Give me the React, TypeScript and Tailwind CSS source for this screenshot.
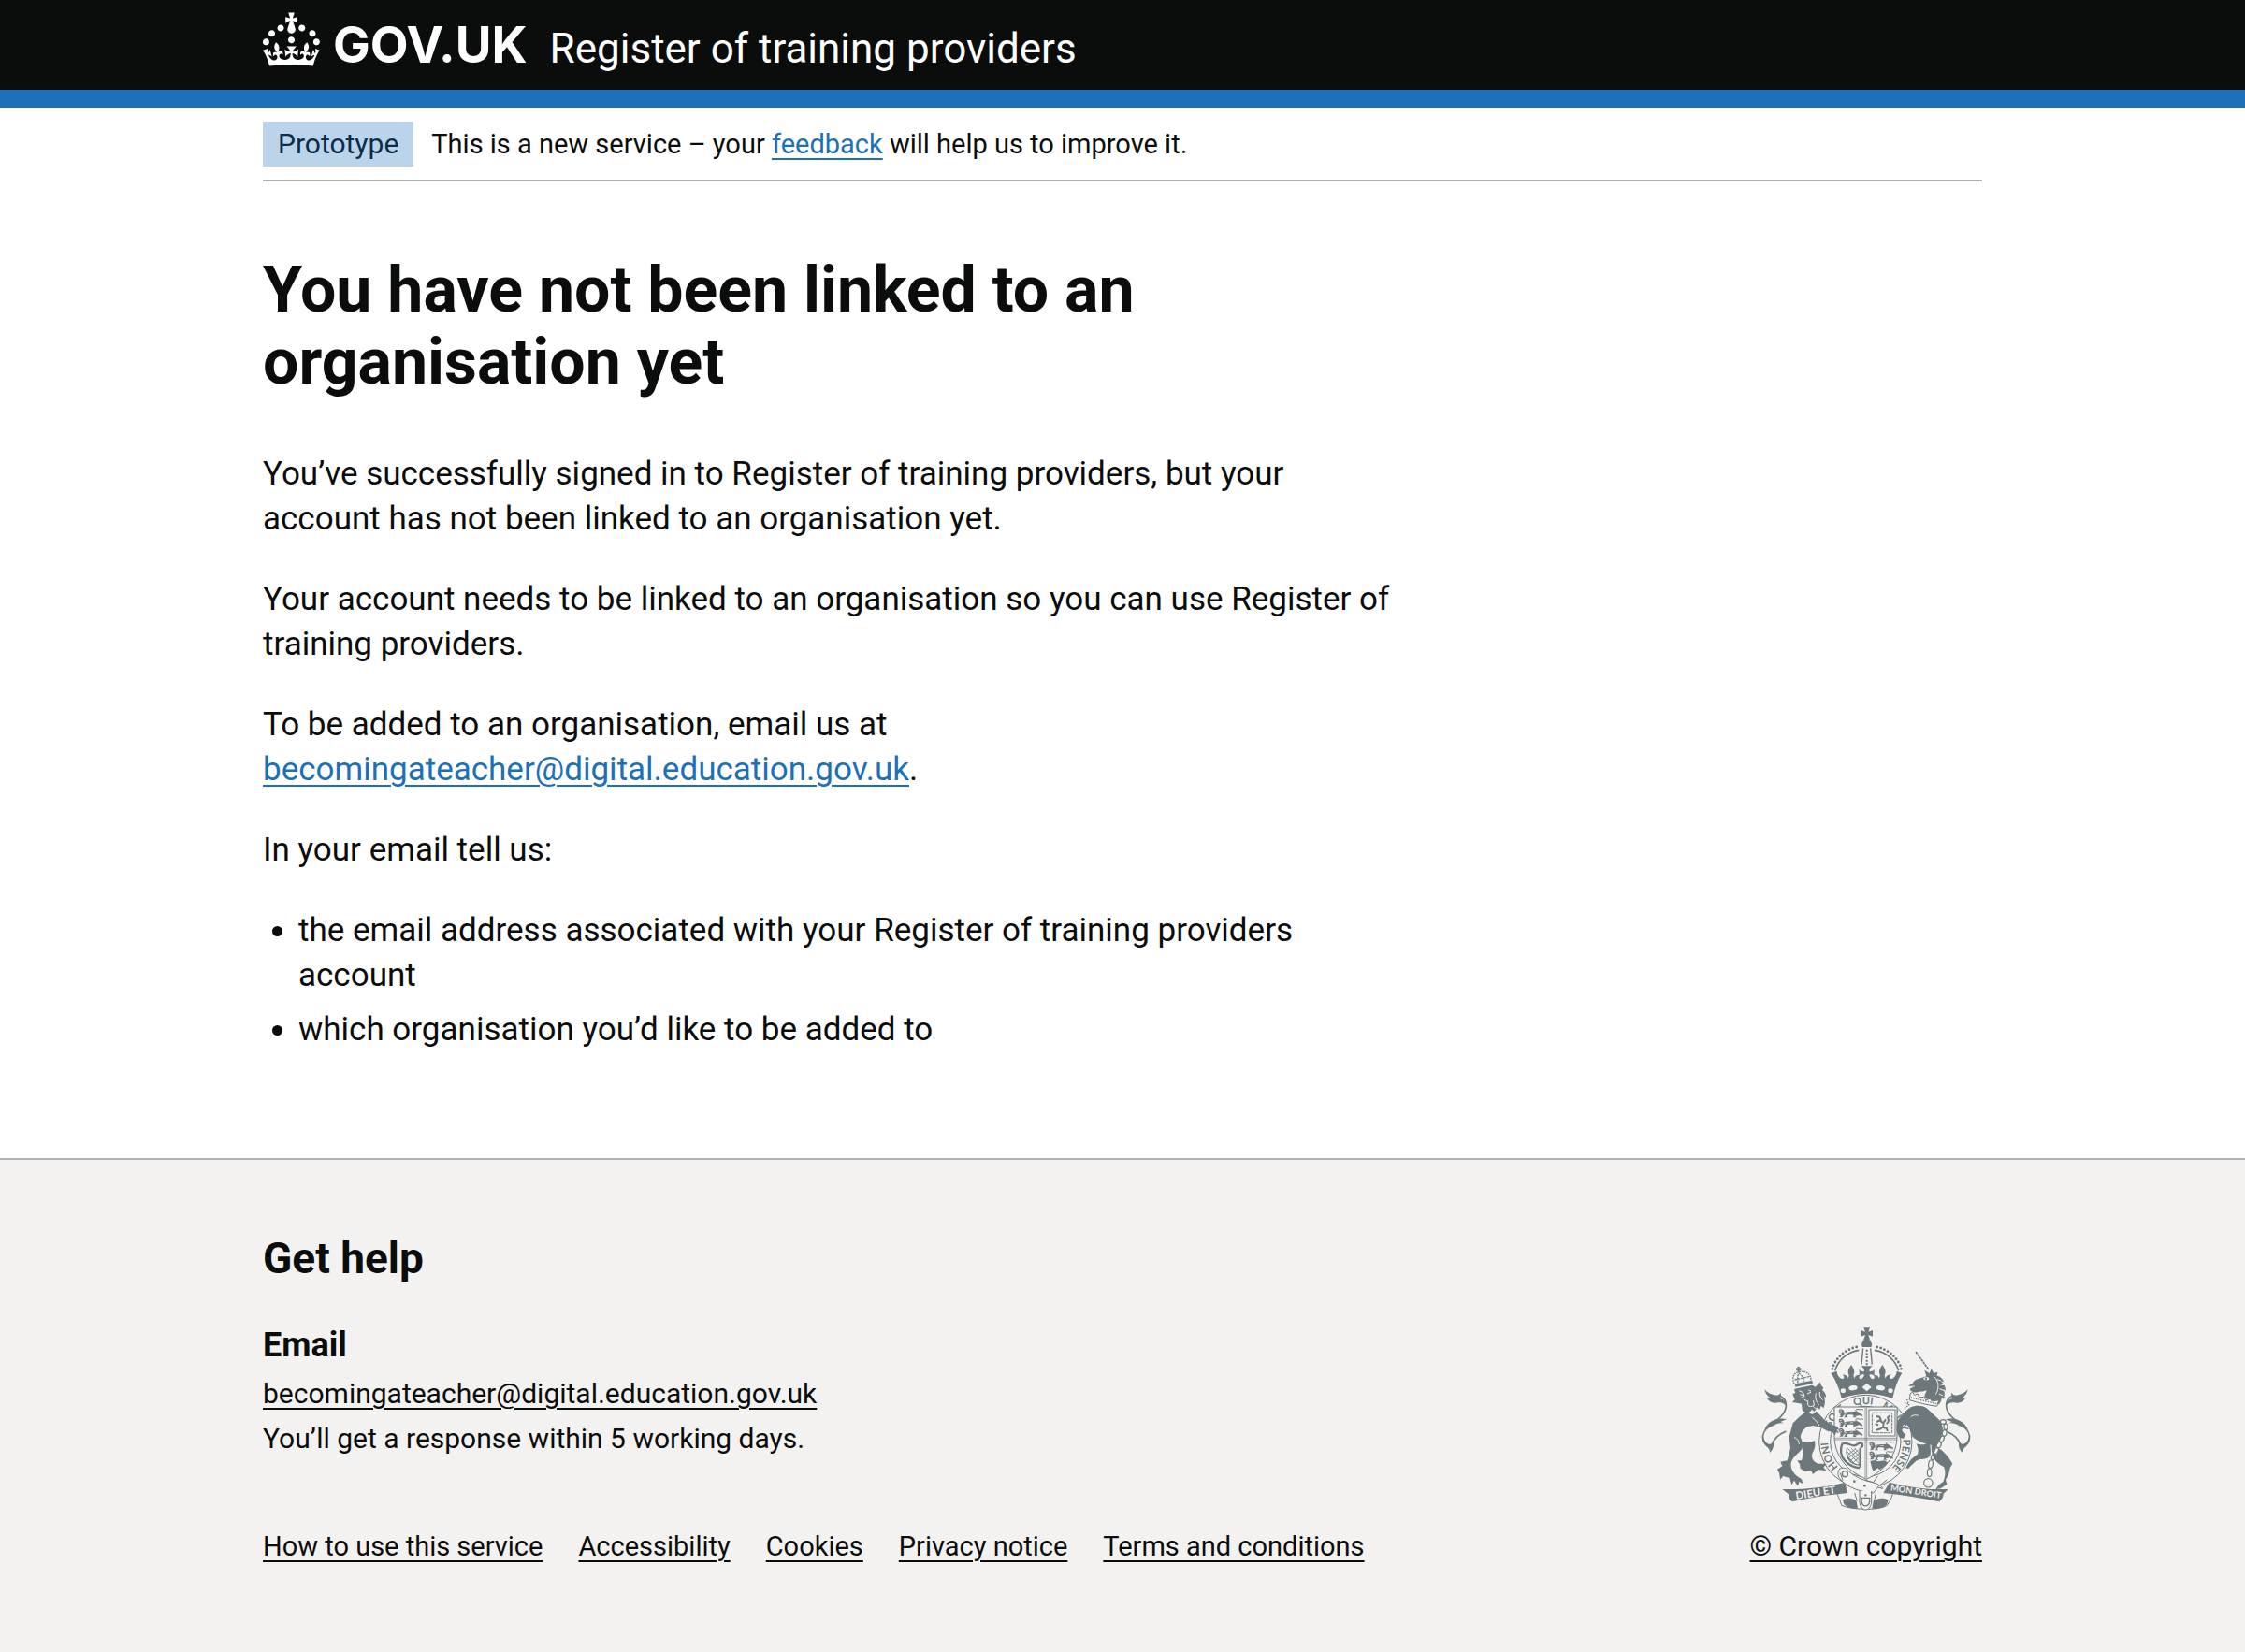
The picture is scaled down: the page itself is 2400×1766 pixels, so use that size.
import React from "react";

const EMAIL = "becomingateacher@digital.education.gov.uk";

const footerLinks = [
  "How to use this service",
  "Accessibility",
  "Cookies",
  "Privacy notice",
  "Terms and conditions",
];

const GREY = "#6c787b";
const PAPER = "#f3f2f1";

function Crown() {
  return (
    <svg viewBox="0 0 32 30" className="h-[58px] w-[61px] shrink-0" fill="currentColor" aria-hidden="true">
      <path d="M22.6 10.4c-1 .4-2-.1-2.4-1-.4-.9.1-2 1-2.4.9-.4 2 .1 2.4 1s-.1 2-1 2.4m5.9 3c-1 .4-2-.1-2.4-1-.4-.9.1-2 1-2.4.9-.4 2 .1 2.4 1s0 2-1 2.4m-11.8 3.7c-.9.4-2-.1-2.4-1-.4-.9.1-2 1-2.4.9-.4 2 .1 2.4 1s-.1 2-1 2.4m14.1 1.1c-1 .4-2-.1-2.4-1-.4-.9.1-2 1-2.4.9-.4 2 .1 2.4 1s-.1 2-1 2.4M17 4.7l2.3 1.2V2.5l-2.3.7-.2-.2.9-3h-3.4l.9 3-.2.2-2.3-.7v3.4L15 4.7c.1.1.1.2.2.2l-1.3 4c-.1.2-.1.4-.1.6 0 1.1.8 2 1.9 2.2h.7c1-.2 1.9-1.1 1.9-2.1 0-.2 0-.4-.1-.6l-1.3-4c-.1-.2 0-.2 0-.3m-7.6 5.7c.9.4 2-.1 2.4-1 .4-.9-.1-2-1-2.4-.9-.4-2 .1-2.4 1s0 2 1 2.4m-5 3c.9.4 2-.1 2.4-1 .4-.9-.1-2-1-2.4-.9-.4-2 .1-2.4 1s.1 2 1 2.4m-3.2 4.8c.9.4 2-.1 2.4-1 .4-.9-.1-2-1-2.4-.9-.4-2 .1-2.4 1s0 2 1 2.4m14.8 11c4.4 0 8.6.3 12.3.8 1.1-4.5 2.4-7 3.7-8.8l-2.5-.9c.2 1.3.3 1.9 0 2.7-.4-.4-.8-1.1-1.1-2.3l-1.2 4c.7-.5 1.3-.8 2-.9-1.1 2.5-2.6 3.1-3.5 3-1.1-.2-1.7-1.2-1.5-2.1.3-1.2 1.5-1.5 2.1-.1 1.1-2.3-.8-3-2-2.3 1.9-1.9 2.1-3.5.6-5.6-2.1 1.6-2.1 3.2-1.2 5.5-1.2-1.4-3.2-.6-2.5 1.6.9-1.4 2.1-.5 1.9.8-.2 1.1-1.7 2.1-3.5 1.9-2.7-.2-2.9-2.1-2.9-3.6.7-.1 1.9.5 2.9 1.9l.4-4.3c-1.1 1.1-2.1 1.4-3.2 1.4.4-1.2 2.1-3 2.1-3h-5.4s1.7 1.9 2.1 3c-1.1 0-2.1-.2-3.2-1.4l.4 4.3c1-1.4 2.2-2 2.9-1.9-.1 1.5-.2 3.4-2.9 3.6-1.9.2-3.4-.8-3.5-1.9-.2-1.3 1-2.2 1.9-.8.7-2.3-1.2-3-2.5-1.6.9-2.2.9-3.9-1.2-5.5-1.5 2-1.3 3.7.6 5.6-1.2-.7-3.1 0-2 2.3.6-1.4 1.8-1.1 2.1.1.2.9-.3 1.9-1.5 2.1-.9.2-2.4-.5-3.5-3 .6 0 1.2.3 2 .9l-1.2-4c-.3 1.1-.7 1.9-1.1 2.3-.3-.8-.2-1.4 0-2.7l-2.9.9C1.3 23 2.6 25.5 3.7 30c3.7-.5 7.9-.8 12.3-.8" />
    </svg>
  );
}

/* One walking lion of the English quarters. */
function Passant({ x, y }: { x: number; y: number }) {
  return (
    <g transform={`translate(${x} ${y})`}>
      <path
        fill={GREY}
        d="M3 3c5-4 10-3 13 1 4 3 4 6 3 9 10-5 20-3 30-4 8-1 14-1 18 3l12 8-2 5-11-5c-2 3-8 4-12 3l5 5H48l2-8c-6-1-12-1-18-1l-5 5 5 4H19l5-9-6 1-4 7H4l5-6-4-3 4-3c-6 0-8-7-6-12z"
      />
      <path fill="none" stroke={GREY} strokeWidth="3" d="M64 12c-14-6-6-13 2-10 6 2 10-2 15 1" />
      <path fill="none" stroke={PAPER} strokeWidth="2" d="M5 7l7-1M20 16l8-2M38 14l10-1M7 12l6 1" />
    </g>
  );
}

/* Flame-tipped tail on the lion's side; mirrored for the unicorn. */
function Tail() {
  return (
    <g>
      <path fill="none" stroke={GREY} strokeWidth="5" d="M148 384C122 396 112 406 104 424c-4 14-16 10-22 0-14-20-8-40 10-54 28-22 54-40 56-66 1-18-6-28-22-34" />
      <path fill={GREY} d="M79 250c10 12 22 16 32 18 8 2 16 0 20-8 2 8 0 14-4 18 14 2 22 14 22 24-8-8-16-12-26-10-14 4-32-2-36-16 4 3 8 4 12 3-12-8-18-18-20-29z" />
      <path fill={GREY} d="M79 378c8-18 22-30 44-34 10-1 18-1 27 3-8 0-12 4-20 7 4 1 6 2 10 5-12-3-22 1-32 7-10 5-20 8-29 12zM72 395c2 14 8 24 20 30 10 2 14-4 14-12 5 14 2 28-9 40-1-8-4-14-12-20-12-10-16-24-13-38z" />
    </g>
  );
}

const garterWords: [string, string][] = [
  ["HONI", "13%"],
  ["SOIT", "31%"],
  ["QUI", "45%"],
  ["MAL", "57%"],
  ["Y", "68%"],
  ["PENSE", "74%"],
];

const pearls = [
  [297, 184], [300, 173], [306, 162], [313, 152], [321, 143],
  [330, 135], [340, 128], [351, 122], [362, 117], [374, 114],
];

function CoatOfArms() {
  return (
    <svg viewBox="60 45 690 600" className="h-[200px] w-[230px]" role="img" aria-label="Royal coat of arms">
      {/* Orb and cross */}
      <g fill={GREY}>
        <path d="M397 52h20l-5 13 14-5v20l-14-5 5 15h-20l5-15-14 5V60l14 5z" />
        <path d="M400 88h14l2 6c8 4 9 14 5 20h-28c-4-6-3-16 5-20z" />
      </g>
      {/* Arches */}
      <g fill="none" stroke={GREY}>
        <path strokeWidth="5" d="M305 190c10-34 38-60 77-66M509 190c-10-34-38-60-77-66" />
        <path strokeWidth="4" d="M395 118l-5 52M419 118l5 52" />
        <path strokeWidth="6" strokeDasharray="6 5" d="M407 122v50" />
      </g>
      {pearls.map(([x, y]) => (
        <g key={x} fill={GREY}>
          <circle cx={x} cy={y} r="4.2" />
          <circle cx={814 - x} cy={y} r="4.2" />
        </g>
      ))}
      {/* Crown circlet with crosses and fleurs-de-lis */}
      <path
        fill={GREY}
        d="M294 197l17-6c0 10 6 20 14 24 10 4 12-8 4-12 12-2 18 6 18 12l3-10c-6-12-2-22 7-34 9 12 13 22 7 34l4 10c0-8 8-14 17-10-5 6-2 12 4 12 4-2 8-6 10-14-8-3-12 0-16 5v-22c6 6 12 8 16 6 0-8-4-12-10-17h36c-6 5-10 9-10 17 4 2 10 0 16-6v22c-4-5-8-8-16-5 2 8 6 12 10 14 6 0 9-6 4-12 9-4 17 2 17 10l4-10c-6-12-2-22 7-34 9 12 13 22 7 34l3 10c0-6 6-14 18-12-8 4-6 16 4 12 8-4 14-14 14-24l17 6c-14 22-24 50-30 82-54-20-110-20-164 0-6-32-20-60-34-82z"
      />
      <g fill={PAPER}>
        <path d="M392 243l15-13 15 13-15 13z" />
        <ellipse cx="363" cy="245" rx="14" ry="8" transform="rotate(-8 363 245)" />
        <ellipse cx="451" cy="245" rx="14" ry="8" transform="rotate(8 451 245)" />
        <ellipse cx="331" cy="254" rx="8" ry="7" />
        <ellipse cx="483" cy="254" rx="8" ry="7" />
      </g>

      {/* Garter */}
      <circle cx="403" cy="417" r="149" fill={PAPER} stroke={GREY} strokeWidth="3" />
      <circle cx="403" cy="417" r="113" fill="none" stroke={GREY} strokeWidth="3" />
      <path id="garter-text" fill="none" d="M403 537A120 120 0 0 1 403 297A120 120 0 0 1 403 537" />
      <text fill={GREY} fontFamily="Lato" fontSize="33" fontWeight="700">
        {garterWords.map(([word, start]) => (
          <textPath key={word} href="#garter-text" startOffset={start}>{word}</textPath>
        ))}
      </text>

      {/* Shield */}
      <path fill={PAPER} stroke={GREY} strokeWidth="3" d="M303 306h201v92c0 62-36 110-98 140-66-28-103-78-103-140z" />
      <path fill="none" stroke={GREY} strokeWidth="2" d="M402 308v228M407 308v228M304 406h200M304 411h200" />
      <Passant x={315} y={312} />
      <Passant x={315} y={343} />
      <Passant x={315} y={374} />
      <g fill="none" stroke={GREY}>
        <rect x="414" y="315" width="84" height="84" strokeWidth="3" />
        <rect x="424" y="325" width="64" height="64" strokeWidth="3" strokeDasharray="10 2" />
      </g>
      <path
        fill="none"
        stroke={GREY}
        strokeWidth="6"
        d="M436 336l12 2 4 10-14 6M450 350l10 8 8-12M460 356c2 12 0 16-8 20l-14 4M458 372l12 2 4 10M434 360l10 4M470 360c8-4 8-14 4-20l6-6"
      />
      {/* Harp */}
      <path fill="none" stroke={GREY} strokeWidth="7" d="M328 424c-8 22-2 42 8 54 12 14 28 22 48 24" />
      <path fill="none" stroke={GREY} strokeWidth="7" d="M328 424c16-6 24 6 38 6 12 0 14-12 24-8 6 4 4 14-4 14M386 438v62" />
      <path fill="none" stroke={GREY} strokeWidth="4" d="M344 436c-4 18 2 36 12 46 8 6 16 10 28 10" />
      <path
        fill="none"
        stroke={GREY}
        strokeWidth="2.5"
        d="M347 440l36 38M344 450l40 38M346 466l24 24M356 438l28 28M367 438l17 17M380 444l-34 28M384 454l-34 28M384 466l-26 24M372 440l-28 22"
      />
      <Passant x={413} y={417} />
      <Passant x={413} y={448} />
      <path fill={GREY} d="M418 480l14-3 12 4 20-3 10 6-8 12-18 12-6-6-14 10-4-8z" />

      {/* Lion */}
      <g fill={GREY}>
        <path d="M184 177h8l-1 5 5-1v8l-5-1 1 6h-8l1-6-5 1v-8l5 1z" />
        <path fill="none" stroke={GREY} strokeWidth="4" strokeDasharray="5 3" d="M174 232c-8-22-2-34 14-38 24-6 40 6 40 28" />
        <path fill="none" stroke={GREY} strokeWidth="4" strokeDasharray="7 3" d="M186 228c-2-14-1-22 3-30 10 6 15 14 17 26M176 219l50-11" />
        <path d="M176 232l56-11 2 10-56 11z" />
        <path d="M182 247l50-11 10 6 16-16c0 8 4 14 10 18l-4 8c8 6 13 14 12 23l-6-1c4 12 4 24-2 36l-8-8-4 12-8-6-10 14-6-8-16 16-16-14-2-20-10-2-20-3 8-8-7-18 9-4-4-12z" />
        <path d="M206 318l26 12 14-10 18 20c12 14 26 22 50 30l4 10-8-2 8 12-10-2-2 10-10-12-14-2-22-12-24-6-22 4c-10 10-18 18-20 32 6 12 8 26 4 40-10 14-30 26-34 44-2 16 4 26 16 40l18 12 4 14-12-6-4 14-12-18-8 14-6-22-22-6-8 12-4-22-6-12 16-10-6-14 22-4 4-16 6-24-4-36 12-44c16-16 34-34 56-44z" />
        <path d="M190 412c16 10 34 10 50 2 4 20-2 30-8 42-4 14 4 26 18 32l28 0-10 12 10 10-26-2-18 14-6-12-16 4-18-10-2-14-8-12 14 0c8-22 4-36-8-66z" />
      </g>
      <g fill="none" stroke={PAPER} strokeWidth="3">
        <path d="M189 254l14 6 4 12-10 4M220 252l8 4M193 266l10 3M216 264l12-5M218 286v14c4 6 12 6 20 1l-2-16M206 282l10 6M244 262c-4 16 2 30 10 38M256 258c-2 12 4 20 10 26M236 304c4 8 8 8 14 4" />
        <path d="M174 404c8 2 14 8 16 22M232 340c12 8 20 20 22 26" />
      </g>
      <Tail />

      {/* Unicorn */}
      <g transform="translate(810 0) scale(-1 1)">
        <Tail />
      </g>
      <path fill="none" stroke={GREY} strokeWidth="5" strokeDasharray="8 2" d="M564 129l42 58" />
      <g fill={GREY}>
        <path d="M540 238l14-6c2-8 8-14 18-16l26-8-6-20 16 10 6-14 8 14 12-4-2 12c12 2 18 10 22 20l-8-2c10 10 14 18 14 30l-7-5c5 12 4 22 1 32l-7-6c0 12-4 16-9 24l-5-10-11 2c-10-6-18-6-28-14-6-8 4-14 4-24-8 4-14 4-22 4-8 2-12 4-18 2l-10-4-2-8 10-4z" />
        <path d="M506 350c14-18 26-34 44-44 24-8 44-2 54 8l32 30c14 14 18 34 12 52-8 16-12 26-10 42 12 8 30 26 44 50l-8 14c-2 16-6 24-14 38l4 14-20 14-16 2 10-14 14-10c8-20 8-34 2-48-20-10-34-22-38-44-2-10-2-18-2-26-20-2-44-12-60-26-6-16-8-28-18-38-6-4-12-2-14 4-4 12-2 18 10 28l-8 12-12-4c-12-18-12-36-6-54z" />
        <path d="M566 424c14 6 30 2 44-4 0 18 4 30 0 42-6 10-18 12-32 12-12 2-22 14-38 30l-8-2c8-18 18-32 38-44 4-12 2-22-4-34z" />
      </g>
      <ellipse cx="598" cy="215" rx="9" ry="5" fill={PAPER} />
      <circle cx="597" cy="215" r="3.5" fill={GREY} />
      <g fill="none" stroke={PAPER} strokeWidth="3">
        <path d="M544 241l16-1M624 210c14 14 16 36 4 56M632 218l14 4M638 232l16 4M640 248l16 6M638 264l14 6" />
        <path d="M548 338c10-8 18-6 26-4" />
      </g>
      <path fill={PAPER} stroke={GREY} strokeWidth="3" d="M546 264l8-6 6 10 10-4 6 12 14-2 6 10 14-4 6 8 22-4-6 20c-32-4-60-12-88-20z" />
      <path fill="none" stroke={GREY} strokeWidth="4" strokeDasharray="4 4" d="M548 276l84 20M536 282l6 18-16 12M528 292l14 6" />

      {/* Chain */}
      <path fill="none" stroke={PAPER} strokeWidth="12" d="M652 354c10 10 8 28 2 42l-28 60" />
      <g fill="none" stroke={GREY} strokeWidth="3.5">
        <ellipse cx="652" cy="354" rx="9" ry="7" />
        <ellipse cx="660" cy="370" rx="6" ry="10" />
        <ellipse cx="656" cy="390" rx="7" ry="10" transform="rotate(15 656 390)" />
        <ellipse cx="648" cy="409" rx="6" ry="11" transform="rotate(25 648 409)" />
        <ellipse cx="638" cy="428" rx="7" ry="10" transform="rotate(25 638 428)" />
        <ellipse cx="630" cy="447" rx="6" ry="11" transform="rotate(25 630 447)" />
        <ellipse cx="620" cy="466" rx="6" ry="10" transform="rotate(25 620 466)" />
        <ellipse cx="612" cy="490" rx="7" ry="13" transform="rotate(8 612 490)" />
        <ellipse cx="608" cy="517" rx="7" ry="13" />
        <circle cx="604" cy="550" r="14" />
      </g>

      {/* Ribbon with the motto */}
      <g fill={GREY}>
        <path d="M136 570c68 2 136-6 202-22l6 34-28 4c-48 4-100 14-148 24-10-10-14-16-12-24z" />
        <path d="M668 570c-68 2-122-6-188-22l-20 34 32 4c48 4 100 14 148 24 10-10 14-16 12-24z" />
        <path d="M330 604c14-8 36-6 44 4l4 24c-16 2-32-2-44-14zM476 604c-14-8-36-6-48 4l-4 24c20 2 38-2 48-14z" />
      </g>
      <path fill="none" stroke={GREY} strokeWidth="3" d="M312 586c6 12 10 22 14 36 30 14 120 18 146 0 8-12 14-22 18-36M368 582l8 26M436 584l-6 26" />
      <g fill={PAPER} fontFamily="Lato" fontWeight="700">
        <text transform="translate(181 603) rotate(-9)" fontSize="34">DIEU ET</text>
        <text transform="translate(482 574) rotate(9)" fontSize="28">MON DROIT</text>
      </g>

      {/* Garter strap and buckle */}
      <path
        fill={PAPER}
        stroke={GREY}
        strokeWidth="3"
        d="M316 512c2-14 26-14 34 0 26 26 54 30 82 38 12 4 24 10 26 18l-16-4-14 18c-36-2-84-16-108-46-6-8-6-16-4-24z"
      />
      <circle cx="337" cy="521" r="9" fill="none" stroke={GREY} strokeWidth="4" />
      <path fill="none" stroke={GREY} strokeWidth="3" d="M322 518l8 24M400 540l28 8 14-20M442 562l30-22" />
      <circle cx="367" cy="545" r="4" fill={GREY} />
      <circle cx="400" cy="559" r="4" fill={GREY} />
      <path fill={PAPER} stroke={GREY} strokeWidth="3" d="M384 576v36c4 32 34 32 38 0v-36" />
      <path fill="none" stroke={GREY} strokeWidth="4" d="M390 598v12c4 18 22 18 26 0v-12z" />
      <circle cx="403" cy="589" r="3.5" fill={GREY} />
    </svg>
  );
}

function Container({ children, className = "" }: { children: React.ReactNode; className?: string }) {
  return <div className={`mx-auto w-full max-w-[1838px] ${className}`}>{children}</div>;
}

const linkLine = "underline decoration-2 underline-offset-[5px]";

export default function App() {
  return (
    <div className="flex min-h-screen flex-col bg-white font-[Roboto,sans-serif] text-[35px] leading-[48px] text-[#0b0c0c]">
      <header>
        <div className="bg-[#0b0c0c] text-white">
          <Container className="flex h-24 items-start pt-[13px]">
            <a href="#" className="flex items-start gap-[14px]">
              <Crown />
              <span className="font-[Inter,sans-serif] text-[53px] leading-[70px] font-bold">GOV.UK</span>
            </a>
            <a href="#" className="ml-6 pt-1 text-[44px] leading-[70px]">
              Register of training providers
            </a>
          </Container>
        </div>
        <div className="h-[19px] bg-[#1d70b8]" />
      </header>

      <Container className="flex items-center gap-[19px] border-b-2 border-[#b1b4b6] pt-[15px] pb-[14px] text-[29px]">
        <strong className="bg-[#bbd4ea] px-4 text-[30px] font-normal text-[#0c2d4a]">Prototype</strong>
        <span>
          This is a new service – your{" "}
          <a href="#" className={`text-[#1d70b8] ${linkLine}`}>feedback</a> will help us to improve it.
        </span>
      </Container>

      <main className="pt-[78px] pb-[113px]">
        <Container>
          <div className="flex max-w-[1212px] flex-col gap-[38px]">
            <h1 className="mb-[19px] text-[68px] leading-[77px] font-bold">
              You have not been linked to an organisation yet
            </h1>
            <p>
              You’ve successfully signed in to Register of training providers, but your account has not been linked
              to an organisation yet.
            </p>
            <p>Your account needs to be linked to an organisation so you can use Register of training providers.</p>
            <p>
              To be added to an organisation, email us at{" "}
              <a href={`mailto:${EMAIL}`} className={`text-[#1d70b8] ${linkLine}`}>{EMAIL}</a>.
            </p>
            <p>In your email tell us:</p>
            <ul className="flex list-disc flex-col gap-[10px] pl-[38px]">
              <li>the email address associated with your Register of training providers account</li>
              <li>which organisation you’d like to be added to</li>
            </ul>
          </div>
        </Container>
      </main>

      <footer className="grow border-t-2 border-[#b1b4b6] bg-[#f3f2f1] py-[77px] text-[30px]">
        <Container className="flex items-end justify-between">
          <div>
            <h2 className="text-[46px] leading-[57px] font-bold">Get help</h2>
            <h3 className="mt-10 text-[36px] font-bold">Email</h3>
            <p className="mt-1">
              <a href={`mailto:${EMAIL}`} className={linkLine}>{EMAIL}</a>
            </p>
            <p>You’ll get a response within 5 working days.</p>
            <ul className="mt-[67px] flex flex-wrap gap-x-[38px] text-[29px]">
              {footerLinks.map((label) => (
                <li key={label}>
                  <a href="#" className={linkLine}>{label}</a>
                </li>
              ))}
            </ul>
          </div>
          <a href="#" className={`flex flex-col items-center gap-3 ${linkLine}`}>
            <CoatOfArms />
            <span>© Crown copyright</span>
          </a>
        </Container>
      </footer>
    </div>
  );
}
